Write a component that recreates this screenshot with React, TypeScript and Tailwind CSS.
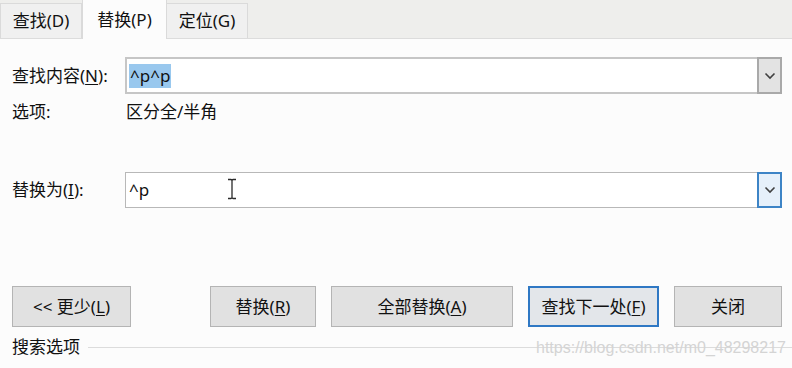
import React from "react";

const font = { fontFamily: '"Noto Sans", "Noto Sans CJK SC", sans-serif' };

function Chevron() {
  return (
    <svg width="12" height="8" viewBox="0 0 12 8">
      <path d="M1.5 1.5 L6 6 L10.5 1.5" fill="none" stroke="#404040" strokeWidth="1.6" />
    </svg>
  );
}

function IBeam() {
  return (
    <svg width="10" height="22" viewBox="0 0 10 22">
      <path d="M1 1.5 H4 Q5 1.5 5 3 V19 Q5 20.5 4 20.5 H1 M9 1.5 H6 Q5 1.5 5 3 M9 20.5 H6 Q5 20.5 5 19" fill="none" stroke="#2a2a2a" strokeWidth="1.3" />
    </svg>
  );
}

function U({ c }: { c: string }) {
  return <span className="underline underline-offset-2">{c}</span>;
}

function Btn({ children, w, focus }: { children: React.ReactNode; w: string; focus?: boolean }) {
  return (
    <div
      className={`${w} h-[41px] flex items-center justify-center text-[17px] text-[#111] ${
        focus ? "border-2 border-[#2f78c4] bg-[#e3e6ea]" : "border border-[#b4b4b4] bg-[#e1e1e1]"
      }`}
    >
      {children}
    </div>
  );
}

export default function App() {
  return (
    <div className="w-[792px] h-[368px] overflow-hidden bg-[#fcfcfc] relative" style={font}>
      {/* tab bar */}
      <div className="h-[39px] bg-[#eeeeec] border-b border-[#dcdcdc] flex items-end relative">
        <div className="w-[82px] h-[35px] border border-b-0 border-[#dadada] bg-[#f0f0f0] flex items-center justify-center text-[17px] text-[#111]">
          查找(D)
        </div>
        <div className="w-[85px] h-[39px] -mb-px bg-[#fcfcfc] border-x border-[#dadada] flex items-center justify-center text-[17px] text-[#111] z-10">
          替换(P)
        </div>
        <div className="w-[81px] h-[35px] border border-b-0 border-l-0 border-[#dadada] bg-[#f0f0f0] flex items-center justify-center text-[17px] text-[#111]">
          定位(G)
        </div>
      </div>

      <div className="pl-[12px] pr-[10px] flex flex-col">
        {/* find row */}
        <div className="mt-[18px] flex items-center h-[37px]">
          <div className="w-[113px] text-[17px] text-[#111] whitespace-nowrap">
            查找内容(<U c="N" />):
          </div>
          <div className="flex-1 h-[37px] border-2 border-[#c6c6c6] bg-white flex items-center">
            <div className="flex-1 pl-[2px] flex items-center">
              <span className="bg-[#99c8ee] h-[24px] leading-[24px] px-[1px] text-[17px] text-[#111]">^p^p</span>
            </div>
            <div className="w-[25px] h-[37px] -mr-[2px] border-2 border-[#a9a9a9] bg-[#e3e3e3] flex items-center justify-center">
              <Chevron />
            </div>
          </div>
        </div>

        {/* options */}
        <div className="mt-[7px] flex items-center h-[22px] text-[17px] text-[#111]">
          <div className="w-[114px]">选项:</div>
          <div>区分全/半角</div>
        </div>

        {/* replace row */}
        <div className="mt-[49px] flex items-center h-[36px]">
          <div className="w-[113px] text-[17px] text-[#111] whitespace-nowrap">
            替换为(<U c="I" />):
          </div>
          <div className="flex-1 h-[36px] border border-[#b8b8b8] bg-white flex items-center relative">
            <div className="flex-1 pl-[3px] text-[17px] text-[#111] leading-[24px]">^p</div>
            <div className="absolute left-[101px] top-[5px]">
              <IBeam />
            </div>
            <div className="w-[25px] h-[36px] -my-px -mr-px border-2 border-[#3d84c6] bg-[#e6f0fa] flex items-center justify-center">
              <Chevron />
            </div>
          </div>
        </div>

        {/* buttons */}
        <div className="mt-[78px] flex items-center">
          <Btn w="w-[119px]">
            &lt;&lt; 更少(<U c="L" />)
          </Btn>
          <div className="w-[79px]" />
          <Btn w="w-[106px]">
            替换(<U c="R" />)
          </Btn>
          <div className="w-[15px]" />
          <Btn w="w-[182px]">
            全部替换(<U c="A" />)
          </Btn>
          <div className="w-[15px]" />
          <Btn w="w-[131px]" focus>
            查找下一处(<U c="F" />)
          </Btn>
          <div className="w-[15px]" />
          <Btn w="w-[108px]">关闭</Btn>
        </div>

        {/* search options */}
        <div className="mt-[9px] flex items-center h-[22px]">
          <div className="text-[17px] text-[#111]">搜索选项</div>
          <div className="flex-1 h-px bg-[#dcdcdc] ml-[8px] -mr-[10px]" />
        </div>
      </div>

      <div
        className="absolute left-[536px] top-[338px] text-[16px] text-[#d4d4d4] leading-[20px]"
        style={{ fontFamily: '"Liberation Sans", sans-serif' }}
      >
        https://blog.csdn.net/m0_48298217
      </div>
    </div>
  );
}
